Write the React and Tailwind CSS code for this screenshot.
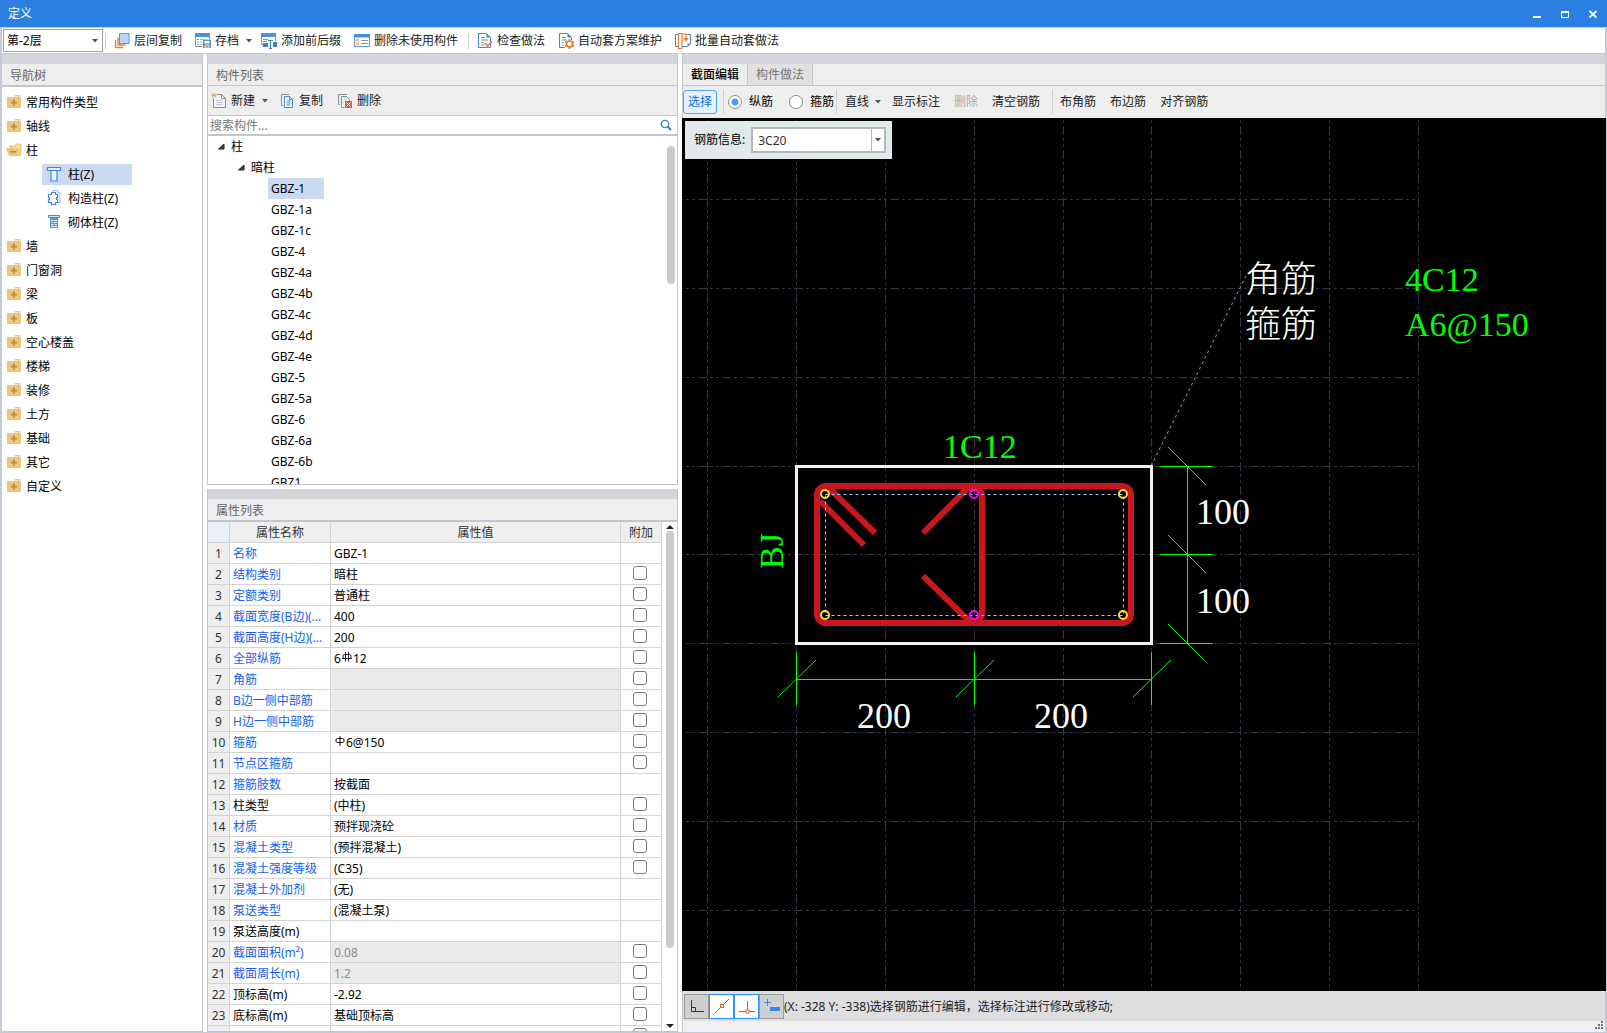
import { useState } from 'react';
import clsx from 'clsx';

const navBefore = ['常用构件类型', '轴线'];
const navAfter = ['墙', '门窗洞', '梁', '板', '空心楼盖', '楼梯', '装修', '土方', '基础', '其它', '自定义'];

const members = [
  'GBZ-1', 'GBZ-1a', 'GBZ-1c', 'GBZ-4', 'GBZ-4a', 'GBZ-4b', 'GBZ-4c', 'GBZ-4d',
  'GBZ-4e', 'GBZ-5', 'GBZ-5a', 'GBZ-6', 'GBZ-6a', 'GBZ-6b', 'GBZ1',
];

const properties = [
  { name: '名称', value: 'GBZ-1', blue: true },
  { name: '结构类别', value: '暗柱', blue: true, check: true },
  { name: '定额类别', value: '普通柱', blue: true, check: true },
  { name: '截面宽度(B边)(...', value: '400', blue: true, check: true },
  { name: '截面高度(H边)(...', value: '200', blue: true, check: true },
  { name: '全部纵筋', value: <>6<RebarC />12</>, blue: true, check: true },
  { name: '角筋', value: '', blue: true, check: true, disabled: true },
  { name: 'B边一侧中部筋', value: '', blue: true, check: true, disabled: true },
  { name: 'H边一侧中部筋', value: '', blue: true, check: true, disabled: true },
  { name: '箍筋', value: <><RebarA />6@150</>, blue: true, check: true },
  { name: '节点区箍筋', value: '', blue: true, check: true },
  { name: '箍筋肢数', value: '按截面', blue: true },
  { name: '柱类型', value: '(中柱)', check: true },
  { name: '材质', value: '预拌现浇砼', blue: true, check: true },
  { name: '混凝土类型', value: '(预拌混凝土)', blue: true, check: true },
  { name: '混凝土强度等级', value: '(C35)', blue: true, check: true },
  { name: '混凝土外加剂', value: '(无)', blue: true },
  { name: '泵送类型', value: '(混凝土泵)', blue: true },
  { name: '泵送高度(m)', value: '' },
  { name: '截面面积(m²)', value: '0.08', blue: true, check: true, disabled: true },
  { name: '截面周长(m)', value: '1.2', blue: true, check: true, disabled: true },
  { name: '顶标高(m)', value: '-2.92', check: true },
  { name: '底标高(m)', value: '基础顶标高', check: true },
  { name: '', value: '', check: true },
];

// rebar grade symbols
function RebarC() {
  return (
    <svg className="inline-block align-baseline mb-[1px]" width="12" height="10" viewBox="0 0 12 10" fill="none" stroke="#111">
      <rect x="2" y="2.5" width="8" height="4" rx="1.500" strokeWidth="0.900" />
      <path d="M4.500 0v9.500M7.500 0v9.500M1 6.500h10" strokeWidth="0.900" />
    </svg>
  );
}

function RebarA() {
  return (
    <svg className="inline-block align-baseline mb-[1px]" width="12" height="10" viewBox="0 0 12 10" fill="none" stroke="#111">
      <rect x="2" y="2.5" width="8" height="4" rx="1.5" />
      <path d="M6 0v10" />
    </svg>
  );
}

function Caret({ className }) {
  return (
    <svg className={className} width="6" height="4" viewBox="0 0 6 4" fill="#555">
      <path d="M0 0h6L3 3.5z" />
    </svg>
  );
}

function Icon({ children }) {
  return (
    <svg className="shrink-0" width="16" height="16" viewBox="0 0 16 16" fill="none">
      {children}
    </svg>
  );
}

function LayersIcon() {
  return (
    <Icon>
      <path d="M1.500 7v7.500H9M4 4.500V12h7.500" stroke="#ea7a2c" strokeWidth="1.300" />
      <rect x="5.500" y="0.500" width="9.500" height="10" fill="#b7d7ff" stroke="#5a97e0" />
    </Icon>
  );
}

function SaveIcon() {
  return (
    <Icon>
      <rect x="0.500" y="1" width="14" height="12.500" fill="#fff" stroke="#8a9099" />
      <path d="M0 0h15v4H0z" fill="#4a90e2" />
      <path d="M2 6.500h2M5.500 6.500h8M2 9h2M5.500 9h2M2 11.500h2M5.500 11.500h2" stroke="#8a9099" />
      <path d="M7 6.500h9V15H7z" fill="#fff" />
      <path d="M8 7h8v8H8z" fill="#4a90e2" />
      <path d="M9.500 8h5v2.500h-5z" fill="#fff" />
      <path d="M10 12h4v3h-4z" fill="#f07a28" stroke="#fff" strokeWidth="0.700" />
    </Icon>
  );
}

function PrefixIcon() {
  return (
    <Icon>
      <path d="M0.500 1v11H3M14.500 1v7" stroke="#8a9099" />
      <path d="M0 0h15v4H0z" fill="#4a90e2" />
      <path d="M2 6.500h5M2 8.500h4" stroke="#8a9099" />
      <path d="M2 10h5v4H2zM12 9h4v5h-4z" fill="#3f7fcf" />
      <path d="M7 7.500h5M9.500 7.500v8M8 15.500h3" stroke="#3f7fcf" strokeWidth="1.200" />
    </Icon>
  );
}

function UnusedIcon() {
  return (
    <Icon>
      <rect x="0.500" y="1.500" width="15" height="12" fill="#fff" stroke="#5a97e0" />
      <path d="M0 1h16v3.500H0z" fill="#4a90e2" />
      <path d="M2 6l3 2.500M5 6L2 8.500M2 9.500L5 12M5 9.500L2 12" stroke="#f09a38" />
      <path d="M7 7.500h7M7 10.500h7" stroke="#8a9099" />
    </Icon>
  );
}

function CheckDocIcon() {
  return (
    <Icon>
      <path d="M1.500 0.500h8l4 4v10h-12z" fill="#fff" stroke="#3f86dc" />
      <path d="M9.500 0.500v4h4z" fill="#3f86dc" />
      <path d="M4 4.500h4M4 7h7M4 9.500h3M4 12h3" stroke="#8a9099" />
      <path d="M7.500 10l3 3 4.500-4.500" stroke="#f07a28" strokeWidth="1.600" />
    </Icon>
  );
}

function GearDocIcon() {
  return (
    <Icon>
      <path d="M7 14.500H1.500v-14h8l4 4V7" fill="#fff" stroke="#3f86dc" />
      <path d="M9.500 0.500v4h4z" fill="#3f86dc" />
      <path d="M4 4.500h4M4 7h5M4 9.500h2M4 12h2" stroke="#8a9099" />
      <path d="M11.500 6v10M7 8.500l9 5M7 13.500l9-5" stroke="#f07a28" strokeWidth="1.700" />
      <circle cx="11.500" cy="11" r="3" fill="#fff" stroke="#f07a28" strokeWidth="1.700" />
    </Icon>
  );
}

function BatchIcon() {
  return (
    <Icon>
      <path d="M3 1.500H0.500v12H3M11 1.500h4.500v9l-3 3H7" fill="#fff" stroke="#3f86dc" />
      <path d="M15.500 10.500h-3v3z" fill="#3f86dc" />
      <path d="M3.500 0.500h3.500v15H3.500zM7 1h4v5" stroke="#ea7a2c" strokeWidth="1.200" />
      <path d="M8 5h6l-3 3.500z" fill="#ea7a2c" />
    </Icon>
  );
}

function NewIcon() {
  return (
    <Icon>
      <path d="M2.500 1.500h8l4 4v9h-12z" fill="#f5f5f5" stroke="#8a9099" />
      <path d="M10.500 1.500v4h4" stroke="#8a9099" />
      <path d="M5 7.500h7M5 9.500h7M5 11.500h7" stroke="#c4c8cc" />
      <path d="M0 0h6v5H0z" fill="#efefef" />
      <path d="M1 0l4 4.500M5 0L1 4.500M0.500 2.200h5" stroke="#f09a38" />
    </Icon>
  );
}

function CopyIcon() {
  return (
    <Icon>
      <path d="M4 12.500H2.500v-11H10" stroke="#8a9099" />
      <path d="M5.500 3.500h5l3 3v8h-8z" fill="#fff" stroke="#3f86dc" />
      <path d="M10.500 3.500v3h3" stroke="#3f86dc" />
      <path d="M7.500 8h4M7.500 10h4M7.500 12h4" stroke="#3f86dc" />
    </Icon>
  );
}

function DeleteIcon() {
  return (
    <Icon>
      <path d="M3 11.500H1.500v-10H10" stroke="#8a9099" />
      <path d="M7.500 14.500h-3v-11h5l3 3V8" stroke="#8a9099" />
      <path d="M8 8h7v7H8z" fill="#d9585a" />
      <path d="M9.500 9.500l4 4M13.500 9.500l-4 4" stroke="#fff" />
    </Icon>
  );
}

function FolderIcon({ open }) {
  if (open) {
    return (
      <svg className="shrink-0" width="16" height="14" viewBox="0 0 16 14">
        <path d="M3 3h6l1-2h5v10l-1 1z" fill="#f6dda5" stroke="#e3b765" strokeWidth="0.800" />
        <path d="M0 5h12.500l2.500 8H3z" fill="#edc57b" />
        <path d="M4 8h6v1.500H4z" fill="#b48a3c" />
      </svg>
    );
  }
  return (
    <svg className="shrink-0" width="16" height="14" viewBox="0 0 16 14">
      <path d="M8 1.500L9.500 0h5v1.500z" fill="#edc57b" />
      <rect x="1" y="2" width="14" height="11" rx="0.500" fill="#edc57b" />
      <path d="M8 4.500v6M5 7.500h6" stroke="#bf9440" strokeWidth="2" />
    </svg>
  );
}

function ColumnIcon() {
  return (
    <Icon>
      <path d="M1.500 1.500h13v3h-13zM5 4.500v10.500h6V4.500" fill="#e9f2fd" stroke="#3f86dc" strokeWidth="1.200" />
    </Icon>
  );
}

function TieColumnIcon() {
  return (
    <Icon>
      <path d="M7 2.500V0.500h5v2h2v4h-1v2h1v4h-2" stroke="#9cc0ef" />
      <path d="M5.500 2.500h4v2h2v3h-1v2h1v3h-2v2h-4v-2h-3v-3h1v-2h-1v-3h3z" fill="#fff" stroke="#3f86dc" strokeWidth="1.200" />
    </Icon>
  );
}

function MasonryIcon() {
  return (
    <Icon>
      <path d="M2.500 1.500h11v2h-11z" fill="#dceafb" stroke="#3f86dc" />
      <path d="M4 4h8v10H4z" fill="#5a97e0" />
      <path d="M5 6.500h2.500M8.500 6.500H11M5 8.500h1.500M7.500 8.500H11M5 10.500h2.500M8.500 10.500H11M5 12.500h6" stroke="#fff" strokeWidth="0.800" />
    </Icon>
  );
}

function Separator({ className }) {
  return <span className={clsx('w-px shrink-0 bg-[#cfcfcf]', className)} />;
}

function ToolButton({ icon, label, caret }) {
  return (
    <button className={clsx('flex h-full items-center gap-1 whitespace-nowrap pl-[7px]', caret ? 'pr-[2px]' : 'pr-[6px]')}>
      {icon}
      {label}
      {caret && <Caret className="ml-[3px]" />}
    </button>
  );
}

function PanelStrip() {
  return <div className="h-[10px] shrink-0 bg-[#d3d5db]" />;
}

function TitleBar() {
  return (
    <header className="flex h-7 shrink-0 items-center justify-between border-b border-[#b9cdea] bg-[#2c80e2] pl-2 pr-[10px] text-white">
      <h1>定义</h1>
      <div className="flex gap-5">
        <button aria-label="最小化">
          <svg width="8" height="8" viewBox="0 0 8 8"><path d="M0 6h8v2H0z" fill="#fff" /></svg>
        </button>
        <button aria-label="最大化">
          <svg width="8" height="8" viewBox="0 0 8 8"><path d="M0 1h8v7H0zM1 3v4h6V3z" fill="#fff" fillRule="evenodd" /></svg>
        </button>
        <button aria-label="关闭">
          <svg width="8" height="8" viewBox="0 0 8 8"><path d="M0.500 1L7.500 7.500M7.500 1L0.500 7.500" stroke="#fff" strokeWidth="1.800" /></svg>
        </button>
      </div>
    </header>
  );
}

function MainToolbar() {
  return (
    <div className="flex h-[26px] shrink-0 items-center border-b border-[#c6c8cc] bg-white pl-px text-[#222]">
      <div className="relative h-[23px] w-[100px] shrink-0">
        <select aria-label="楼层" className="h-full w-full appearance-none border border-[#a0a0a0] bg-white pl-[3px] text-black outline-none">
          <option>第-2层</option>
        </select>
        <Caret className="pointer-events-none absolute right-[5px] top-[10px]" />
      </div>
      <Separator className="ml-[2px] mr-px h-4" />
      <ToolButton icon={<LayersIcon />} label="层间复制" />
      <ToolButton icon={<SaveIcon />} label="存档" caret />
      <ToolButton icon={<PrefixIcon />} label="添加前后缀" />
      <ToolButton icon={<UnusedIcon />} label="删除未使用构件" />
      <Separator className="ml-1 mr-px h-4" />
      <ToolButton icon={<CheckDocIcon />} label="检查做法" />
      <ToolButton icon={<GearDocIcon />} label="自动套方案维护" />
      <ToolButton icon={<BatchIcon />} label="批量自动套做法" />
    </div>
  );
}

function NavRow({ open, label }) {
  return (
    <li className="flex h-6 items-center gap-1 pl-1">
      <FolderIcon open={open} />
      <span className="pt-[2px]">{label}</span>
    </li>
  );
}

function NavChild({ icon, label, selected }) {
  return (
    <li className="flex h-6 items-center pl-10">
      <div className={clsx('flex h-[21px] w-[90px] items-center gap-[6px] pl-1', selected && 'bg-[#c9daf1]')}>
        {icon}
        <span className="pt-[2px]">{label}</span>
      </div>
    </li>
  );
}

function NavTree() {
  return (
    <nav className="flex w-[201px] shrink-0 flex-col border-b border-r border-[#c3c7cc] bg-white">
      <PanelStrip />
      <h2 className="h-[23px] shrink-0 border-b-2 border-[#c3c7cc] bg-[#eee] pl-2 pt-px leading-[21px] text-[#666]">导航树</h2>
      <ul className="pt-[3px] text-black">
        {navBefore.map((label) => <NavRow key={label} label={label} />)}
        <NavRow open label="柱" />
        <NavChild icon={<ColumnIcon />} label="柱(Z)" selected />
        <NavChild icon={<TieColumnIcon />} label="构造柱(Z)" />
        <NavChild icon={<MasonryIcon />} label="砌体柱(Z)" />
        {navAfter.map((label) => <NavRow key={label} label={label} />)}
      </ul>
    </nav>
  );
}

function Expander() {
  return (
    <svg width="7" height="7" viewBox="0 0 7 7"><path d="M6 1v5H0.500z" fill="#444" stroke="#222" /></svg>
  );
}

function MemberList() {
  const [selected, setSelected] = useState('GBZ-1');

  return (
    <section className="flex min-h-0 flex-col border-x border-b border-[#c3c7cc] bg-white">
      <PanelStrip />
      <h2 className="h-[22px] shrink-0 border-b border-[#c3c7cc] bg-[#eee] pl-2 pt-px leading-[21px] text-[#666]">构件列表</h2>
      <div className="flex h-[30px] shrink-0 items-center border-b border-[#c3c7cc] bg-[#eee] text-[#222]">
        <button className="flex items-center gap-1 pl-[3px]">
          <NewIcon />新建<Caret className="ml-[3px]" />
        </button>
        <button className="flex items-center gap-1 pl-[11px]"><CopyIcon />复制</button>
        <button className="flex items-center gap-1 pl-[14px]"><DeleteIcon />删除</button>
      </div>
      <div className="flex h-5 shrink-0 items-center border-b-2 border-[#c3c7cc] pl-[2px] pr-[5px]">
        <input aria-label="搜索构件" placeholder="搜索构件..." className="h-full min-w-0 flex-1 outline-none placeholder:text-[#777]" />
        <svg width="12" height="12" viewBox="0 0 12 12" fill="none" stroke="#2f86bd">
          <circle cx="5" cy="5" r="3.700" strokeWidth="1.300" />
          <path d="M7.500 7.500l3.500 3.500" strokeWidth="1.800" />
        </svg>
      </div>
      <div className="flex min-h-0 flex-1 overflow-hidden">
        <ul className="min-w-0 flex-1 text-black">
          <li className="flex h-[21px] items-center gap-[6px] pl-[10px]"><Expander />柱</li>
          <li className="flex h-[21px] items-center gap-[6px] pl-[30px]"><Expander />暗柱</li>
          {members.map((name) => (
            <li
              key={name}
              onClick={() => setSelected(name)}
              className={clsx('ml-[60px] h-[21px] w-14 pl-[3px] leading-[21px]', name === selected && 'bg-[#c9daf1]')}
            >
              {name}
            </li>
          ))}
        </ul>
        <div className="w-[10px] pr-[2px] pt-[10px]">
          <div className="h-[138px] rounded-full bg-[#cbcbcb]" />
        </div>
      </div>
    </section>
  );
}

function PropertyTable() {
  const cell = 'border-b border-r border-[#d3d3d3] p-0';
  const textCell = clsx(cell, 'pt-[2px] leading-[18px]');

  return (
    <section className="flex min-h-0 flex-col border-x border-b border-[#c3c7cc] bg-white">
      <PanelStrip />
      <h2 className="h-[23px] shrink-0 border-b-2 border-[#c3c7cc] bg-[#eee] pl-2 pt-px leading-[21px] text-[#666]">属性列表</h2>
      <div className="flex min-h-0 flex-1 overflow-hidden">
        <div className="min-w-0 flex-1 overflow-hidden">
          <table className="w-full table-fixed border-separate border-spacing-0">
            <colgroup>
              <col className="w-[22px]" />
              <col className="w-[101px]" />
              <col />
              <col className="w-[41px]" />
            </colgroup>
            <thead className="bg-[#eee] text-[#333]">
              <tr className="h-[21px]">
                <th className={clsx(textCell, 'bg-[#e9eff7]')} />
                <th className={clsx(textCell, 'font-normal')}>属性名称</th>
                <th className={clsx(textCell, 'font-normal')}>属性值</th>
                <th className={clsx(textCell, 'font-normal')}>附加</th>
              </tr>
            </thead>
            <tbody>
              {properties.map((row, i) => (
                <tr key={i} className="h-[21px]">
                  <td className={clsx(textCell, 'bg-[#eee] text-center text-[#333]')}>{i + 1}</td>
                  <td className={clsx(textCell, 'whitespace-nowrap pl-[3px]', row.blue ? 'text-[#1260f0]' : 'text-black')}>{row.name}</td>
                  <td className={clsx(textCell, 'pl-[3px]', row.disabled ? 'bg-[#eaeaea] text-[#8c8c8c]' : 'text-black')}>{row.value}</td>
                  <td className={cell}>
                    {row.check && (
                      <input
                        type="checkbox"
                        aria-label={row.name || '附加'}
                        className="mb-[2px] ml-3 block size-[14px] appearance-none rounded-[3px] border border-[#777] bg-white checked:bg-[#4a90e2]"
                      />
                    )}
                  </td>
                </tr>
              ))}
            </tbody>
          </table>
        </div>
        <div className="flex w-[15px] flex-col items-center py-[2px]">
          <svg width="8" height="5" viewBox="0 0 8 5"><path d="M0 5l4-4 4 4z" fill="#222" /></svg>
          <div className="mt-[2px] min-h-0 w-2 flex-[417] rounded-full bg-[#cbcbcb]" />
          <div className="flex-[76]" />
          <svg width="8" height="5" viewBox="0 0 8 5"><path d="M0 0l4 4 4-4z" fill="#222" /></svg>
        </div>
      </div>
    </section>
  );
}

const gridX = [25, 114, 203, 292, 381, 469, 558, 647, 736];
const gridY = [81, 170, 259, 348, 436, 525, 614, 703, 792];

function SectionDrawing() {
  return (
    <svg className="block h-full w-full" fill="none">
      <g stroke="#303642" strokeDasharray="9 3 3 3 3 3">
        {gridX.map((x) => <line key={x} x1={x + 0.5} x2={x + 0.5} y1="-16" y2="100%" />)}
        {gridY.map((y) => <line key={y} x1="-8" x2="736" y1={y + 0.5} y2={y + 0.5} />)}
      </g>

      <path d="M469 348L564 158" stroke="#a0a0a0" strokeDasharray="3 3" />
      <rect x="114.500" y="348.500" width="355" height="177" stroke="#f2f2f2" strokeWidth="3" />

      {/* stirrup and tie */}
      <g stroke="#c8171e" strokeWidth="6">
        <rect x="135" y="368" width="314" height="137" rx="9" />
        <path d="M241 415l44-44q7-4 12 0q3 3 3 8v115q0 5-3 8q-5 4-11 0l-45-44" />
        <path d="M147 370l46 45M138 383l44 44" />
      </g>
      <rect x="143.500" y="376.500" width="298" height="121" stroke="#a9cdf5" strokeDasharray="3 3" />
      {[143, 292, 441].map((x) =>
        [376, 497].map((y) => (
          <circle key={`${x}-${y}`} cx={x} cy={y} r="4" stroke={x === 292 ? '#ff00ff' : '#ffe02a'} strokeWidth="2" />
        ))
      )}

      {/* dimensions */}
      <g stroke="#00ff00">
        <path d="M505.500 348v178M114 561.500h356" />
        {[348, 436, 525].map((y) => (
          <g key={y}>
            <path d={`M478 ${y + 0.5}h53`} />
            <path d={`M486 ${y - 19}l38 38`} />
          </g>
        ))}
        {[114, 292, 469].map((x) => (
          <g key={x}>
            <path d={`M${x + 0.5} 534v53`} />
            <path d={`M${x - 18} 579l38 -37`} />
          </g>
        ))}
      </g>

      <g className="font-['Liberation_Serif','Noto_Sans_CJK_SC',serif] font-light">
        <g fill="#fff" className="text-[36px]">
          <text x="175" y="610">200</text>
          <text x="352" y="610">200</text>
          <text x="514" y="406">100</text>
          <text x="514" y="495">100</text>
          <text x="563" y="174">角筋</text>
          <text x="563" y="219">箍筋</text>
        </g>
        <g fill="#00ff00" className="text-[34px]">
          <text x="261" y="340">1C12</text>
          <text x="723" y="173">4C12</text>
          <text x="723" y="218">A6@150</text>
          <text transform="translate(101 451) rotate(-90)">BJ</text>
        </g>
      </g>
    </svg>
  );
}

function EditorToolbar() {
  const [mode, setMode] = useState('纵筋');
  const plain = 'h-full whitespace-nowrap px-[7px]';

  return (
    <div className="flex h-8 shrink-0 items-center bg-[#eee] text-[#222]">
      <button className="h-6 w-[34px] rounded-[3px] border border-[#56a3f5] bg-[#e6f1fd] text-[#0a6fe0]">选择</button>
      <Separator className="ml-[6px] mr-1 h-6" />
      {['纵筋', '箍筋'].map((label) => (
        <label key={label} className="mr-4 flex items-center gap-[7px] whitespace-nowrap text-black last-of-type:mr-[2px]">
          <input
            type="radio"
            name="mode"
            checked={mode === label}
            onChange={() => setMode(label)}
            className="size-[14px] appearance-none rounded-full border border-[#8c8c8c] bg-white checked:bg-[radial-gradient(circle,#4a9df8_3px,#fff_4px)]"
          />
          {label}
        </label>
      ))}
      <Separator className="h-6" />
      <button className="flex h-full items-center gap-[6px] whitespace-nowrap pl-2 pr-1">直线<Caret /></button>
      <button className={plain}>显示标注</button>
      <button className={clsx(plain, 'text-[#aaa]')} disabled>删除</button>
      <button className={plain}>清空钢筋</button>
      <Separator className="ml-[5px] h-6" />
      <button className={plain}>布角筋</button>
      <button className={plain}>布边筋</button>
      <button className={plain}>对齐钢筋</button>
    </div>
  );
}

function StatusBar() {
  const box = 'flex size-[25px] items-center justify-center border';
  const off = 'border-[#9a9a9a] bg-[#cfcfd1]';
  const on = 'border-[#2b92ff] bg-white';

  return (
    <footer className="shrink-0 bg-[#f0f0f0]">
      <div className="flex h-[30px] items-center bg-[#dedee0] pl-px text-[#222]">
        <button aria-label="正交" className={clsx(box, off)}>
          <Icon><path d="M2.500 2v11.500H15M2.500 9.500h4v4" stroke="#333" /></Icon>
        </button>
        <button aria-label="中点捕捉" className={clsx(box, on)}>
          <Icon>
            <path d="M1 15L15 1" stroke="#3f86dc" />
            <rect x="6.500" y="6.500" width="3" height="3" fill="#fff" stroke="#ea6a1c" />
          </Icon>
        </button>
        <button aria-label="垂点捕捉" className={clsx(box, on)}>
          <Icon>
            <path d="M0 13.500h16M8.500 3v10" stroke="#3f86dc" />
            <rect x="7" y="12" width="3" height="3" fill="#fff" stroke="#ea6a1c" />
          </Icon>
        </button>
        <button aria-label="动态输入" className={clsx(box, off)}>
          <Icon>
            <path d="M0 4.500h7M3.500 1v7" stroke="#3f86dc" />
            <path d="M6 9h10v4H6z" fill="#3f86dc" />
          </Icon>
        </button>
        <span className="whitespace-nowrap pt-[2px]">(X: -328 Y: -338)选择钢筋进行编辑，选择标注进行修改或移动;</span>
      </div>
      <div className="flex h-[11px] justify-end pr-[2px]">
        <svg width="8" height="8" viewBox="0 0 8 8" fill="#6b7280">
          <path d="M6 0h2v2H6zM3 3h2v2H3zM6 3h2v2H6zM0 6h2v2H0zM3 6h2v2H3zM6 6h2v2H6z" />
        </svg>
      </div>
    </footer>
  );
}

function SectionEditor() {
  return (
    <main className="flex min-w-0 flex-1 flex-col border-l border-[#c3c7cc]">
      <PanelStrip />
      <div className="flex h-[22px] shrink-0 border-b border-[#c3c7cc] bg-[#eee]">
        <button className="w-[65px] border-r border-[#c3c7cc] font-medium text-black">截面编辑</button>
        <button className="w-[65px] border-r border-[#c3c7cc] bg-[#e1e1e1] text-[#777]">构件做法</button>
      </div>
      <EditorToolbar />
      <div className="relative -mx-px min-h-0 flex-1 overflow-hidden bg-black">
        <SectionDrawing />
        <div className="absolute left-[3px] top-[3px] flex h-[38px] items-center gap-[6px] bg-[#e1e9ea] pl-[9px] pr-[6px] text-black">
          <label htmlFor="rebar">钢筋信息:</label>
          <div className="flex h-[26px] w-[135px] border-2 border-[#b3b7ba] bg-white">
            <input id="rebar" defaultValue="3C20" className="min-w-0 flex-1 pl-[5px] pt-[2px] text-[#333] outline-none" />
            <button aria-label="展开" className="flex w-[13px] items-center justify-center border-l border-[#b3b7ba]"><Caret /></button>
          </div>
        </div>
      </div>
      <StatusBar />
    </main>
  );
}

export default function App() {
  return (
    <div className="flex h-screen flex-col overflow-hidden bg-white font-['Noto_Sans','Noto_Sans_CJK_SC',sans-serif] text-[12px] leading-4">
      <TitleBar />
      <div className="flex min-h-0 flex-1 flex-col border-x-2 border-b border-[#c3cbdb]">
        <MainToolbar />
        <div className="flex min-h-0 flex-1 gap-1">
          <NavTree />
          <div className="grid w-[471px] shrink-0 grid-rows-[431fr_543fr] gap-1">
            <MemberList />
            <PropertyTable />
          </div>
          <SectionEditor />
        </div>
      </div>
    </div>
  );
}
